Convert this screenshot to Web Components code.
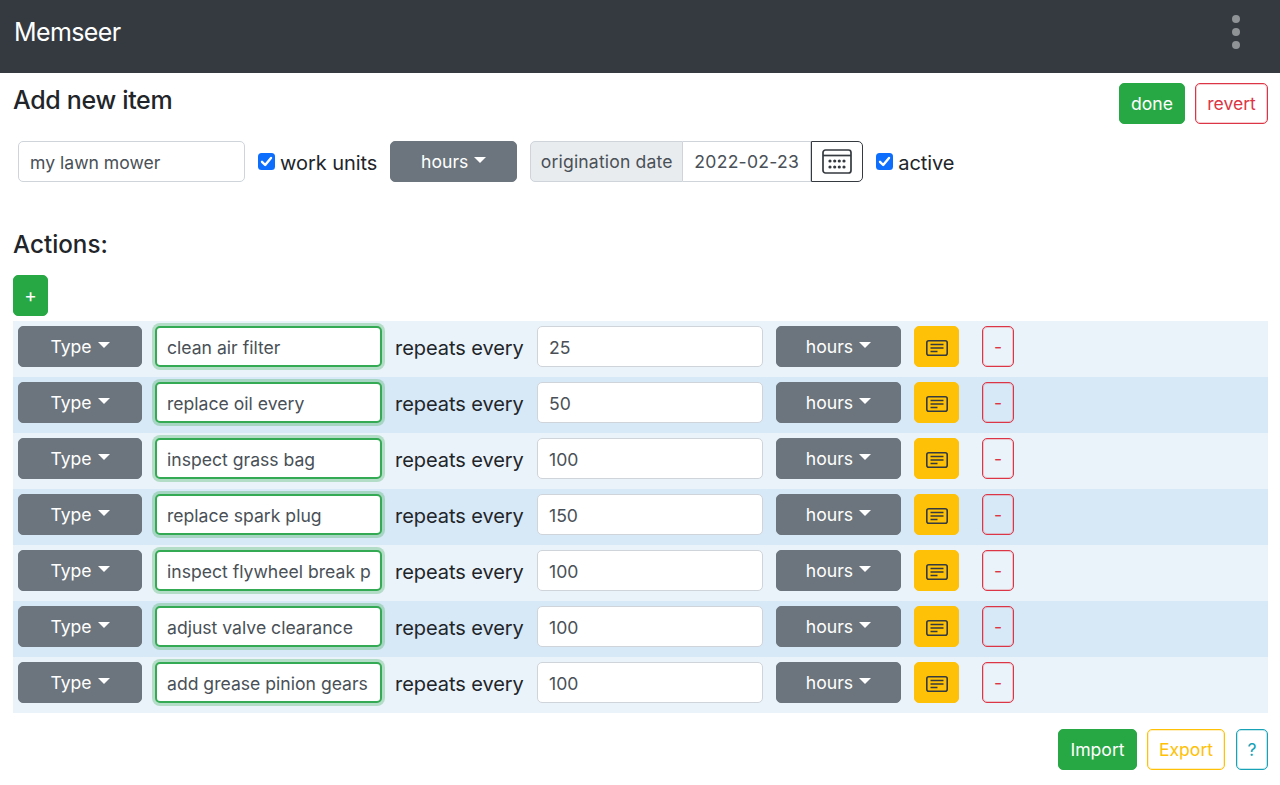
<!DOCTYPE html>
<html lang="en"><head><meta charset="utf-8"><title>Memseer</title>
<style>
html,body{margin:0;padding:0;background:#fff}
body{font-family:Inter,"Liberation Sans",sans-serif;color:#212529;font-size:18px;height:785px;overflow:hidden}
</style></head><body>
<template id="t-btn"><style>
:host{display:inline-flex;box-sizing:border-box;height:41px;align-items:center;justify-content:center;border-radius:5px;border:1px solid transparent;font-size:var(--fs,17.6px);flex:none;background:var(--bg,#6c757d);color:var(--fg,#fff);border-color:var(--bd,#6c757d);width:var(--w,auto);box-shadow:var(--sh,none)}
.c{display:none;width:0;height:0;margin-left:6px;margin-top:-3px;border-left:6px solid transparent;border-right:6px solid transparent;border-top:6px solid currentColor}
:host([caret]) .c{display:inline-block}
</style><slot></slot><span class="c"></span></template>
<template id="t-input"><style>
:host{display:block;flex:none;box-sizing:border-box;height:41px;width:var(--w,227px);background:#fff;border:1px solid #ced4da;border-radius:5px;padding:0 11px;font-size:17.6px;line-height:41px;color:#495057;white-space:nowrap;overflow:hidden}
:host([valid]){border:2px solid #35aa55;box-shadow:0 0 0 3px rgba(40,167,69,.28);padding:0 10px;line-height:39px}
</style><slot></slot></template>
<template id="t-check"><style>
:host{display:inline-flex;align-items:center;flex:none;font-size:20px;letter-spacing:-.06px;gap:5px;color:#212529}
svg{display:block;width:17px;height:17px}
span{padding-top:2px}
</style><svg viewBox="0 0 17 17"><rect width="17" height="17" rx="3.5" fill="#0d6efd"/><path d="M4 8.8l3.2 3.2L13 5" fill="none" stroke="#fff" stroke-width="2.4" stroke-linecap="round" stroke-linejoin="round"/></svg><span><slot></slot></span></template>
<template id="t-nav"><style>
:host{display:flex;align-items:center;justify-content:space-between;height:73px;background:#343a40;color:#fff;padding:0 40px 10px 14px;box-sizing:border-box;font-size:25px;letter-spacing:-.6px}
i{display:flex;flex-direction:column;gap:5px}
b{display:block;width:8px;height:8px;border-radius:50%;background:#8f9396}
</style><slot></slot><i><b></b><b></b><b></b></i></template>
<template id="t-date"><style>
:host{display:flex;flex:none;height:41px;box-sizing:border-box;font-size:17.6px}
.l{display:flex;align-items:center;width:153px;justify-content:center;box-sizing:border-box;background:#e9ecef;border:1px solid #ced4da;border-radius:5px 0 0 5px;color:#495057;letter-spacing:.15px}
.v{display:flex;align-items:center;justify-content:center;width:128px;box-sizing:border-box;border:1px solid #ced4da;border-left:0;color:#495057;letter-spacing:.25px}
.b{display:flex;align-items:center;justify-content:center;width:52px;box-sizing:border-box;border:1px solid #343a40;border-radius:0 5px 5px 0}
</style><span class="l"><slot name="label"></slot></span><span class="v"><slot name="value"></slot></span><span class="b"><svg width="30" height="25" viewBox="0 0 30 25" fill="none"><rect x="1" y="1" width="28" height="23" rx="2.5" stroke="#343a40" stroke-width="1.7"/><path d="M1 6.5h28" stroke="#343a40" stroke-width="1.7"/><g fill="#343a40"><circle cx="8" cy="12" r="1.6"/><circle cx="12.700" cy="12" r="1.6"/><circle cx="17.300" cy="12" r="1.6"/><circle cx="22" cy="12" r="1.6"/><circle cx="8" cy="18" r="1.6"/><circle cx="12.700" cy="18" r="1.6"/><circle cx="17.300" cy="18" r="1.6"/><circle cx="22" cy="18" r="1.6"/></g></svg></span></template>
<template id="t-row"><style>
:host{display:flex;align-items:flex-start;gap:13px;height:56px;padding:5px 5px 0;box-sizing:border-box;background:#ebf3fa;white-space:nowrap}
:host([alt]){background:#d7e8f6}
.rep{font-size:20px;flex:none;width:129px;line-height:44px;letter-spacing:-.06px}
.minus{margin-left:10px}
svg{margin-top:3px}
</style><m-btn caret style="--w:124px">Type</m-btn><m-input valid><slot></slot></m-input><span class="rep">repeats every</span><m-input style="--w:226px"><slot name="n"></slot></m-input><m-btn caret style="--w:125px">hours</m-btn><m-btn style="--w:45px;--bg:#ffc107;--bd:#ffc107"><svg width="22" height="16" viewBox="0 0 22 16" fill="none" stroke="#343a40" stroke-width="1.6"><rect x=".8" y=".8" width="20.4" height="14.4" rx="2"/><path d="M4.500 4.600h13M4.500 8h13M4.500 11.400h7" stroke-width="1.5"/></svg></m-btn><m-btn class="minus" style="--w:32px;--bg:transparent;--fg:#dc3545;--bd:#dc3545;--fs:17.6px;--sh:inset 0 0 0 1px rgba(220,53,69,.25)">-</m-btn></template>
<script>
for(const [n,t] of [['m-btn','t-btn'],['m-input','t-input'],['m-check','t-check'],['m-nav','t-nav'],['m-date','t-date'],['m-row','t-row']]){
 customElements.define(n,class extends HTMLElement{constructor(){super();this.attachShadow({mode:'open'}).appendChild(document.getElementById(t).content.cloneNode(true))}});
}
class MPage extends HTMLElement{constructor(){super();const s=this.attachShadow({mode:'open'});s.innerHTML=`<style>
:host{display:block;padding:10px 12px 0 13px}
.top{display:flex;justify-content:space-between;align-items:flex-start}
h4{margin:1px 0 0;font-size:25px;font-weight:500;line-height:32px;letter-spacing:-.33px}
.btns{display:flex;gap:10px}
.form{display:flex;align-items:center;gap:13px;margin-top:17px;padding-left:5px}
h5{margin:45px 0 0;font-size:24.2px;font-weight:500;line-height:36px}
.add{margin-top:12px;display:block;height:41px}
.rows{margin-top:5px}
.foot{display:flex;justify-content:flex-end;margin-top:16px}
</style>
<div class="top"><h4>Add new item</h4><div class="btns"><m-btn style="--w:66px;--bg:#28a745;--bd:#28a745">done</m-btn><m-btn style="--w:73px;--bg:#fff;--fg:#dc3545;--bd:#dc3545;--sh:inset 0 0 0 1px rgba(220,53,69,.25)">revert</m-btn></div></div>
<div class="form"><m-input style="--w:227px">my lawn mower</m-input><m-check>work units</m-check><m-btn caret style="--w:127px">hours</m-btn><m-date><span slot="label">origination date</span><span slot="value">2022-02-23</span></m-date><m-check>active</m-check></div>
<h5>Actions:</h5>
<div class="add"><m-btn style="--w:35px;--bg:#28a745;--bd:#28a745;--fs:19px">+</m-btn></div>
<div class="rows">${[['clean air filter',25],['replace oil every',50],['inspect grass bag',100],['replace spark plug',150],['inspect flywheel break p',100],['adjust valve clearance',100],['add grease pinion gears',100]].map((r,i)=>`<m-row ${i%2?'alt':''}>${r[0]}<span slot="n">${r[1]}</span></m-row>`).join('')}</div>
<div class="foot"><m-btn style="--w:79px;--bg:#28a745;--bd:#28a745">Import</m-btn><m-btn style="--w:78px;margin-left:10px;--bg:#fff;--fg:#ffc107;--bd:#ffc107;--sh:inset 0 0 0 1px rgba(255,193,7,.25)">Export</m-btn><m-btn style="--w:32px;margin-left:11px;--bg:#fff;--fg:#17a2b8;--bd:#17a2b8;--sh:inset 0 0 0 1px rgba(23,162,184,.25)">?</m-btn></div>`}}
customElements.define('m-page',MPage);
</script>
<m-nav>Memseer</m-nav>
<m-page></m-page>
</body></html>
